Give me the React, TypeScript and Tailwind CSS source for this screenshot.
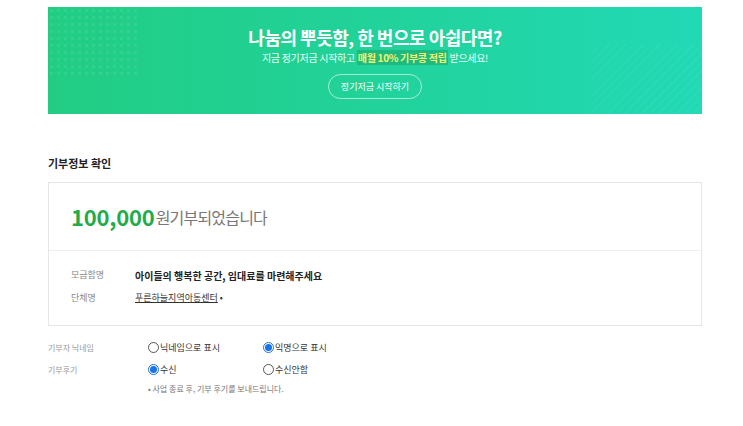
import React from "react";

const font = { fontFamily: '"Noto Sans CJK KR", "Noto Sans", sans-serif' };

function Radio({ checked, label }: { checked?: boolean; label: string }) {
    return (
        <label className="flex items-center gap-[1px] text-[9px] text-[#333] leading-none">
            <span
                className={`w-[11px] h-[11px] rounded-full border flex items-center justify-center ${checked ? "border-[#1a73e8]" : "border-[#555]"}`}
            >
                {checked && <span className="w-[7px] h-[7px] rounded-full bg-[#1a73e8]" />}
            </span>
            {label}
        </label>
    );
}

export default function App() {
    return (
        <div className="min-h-screen bg-white pt-[7px]" style={font}>
            <div className="ml-[48px] w-[654px]">
                {/* Banner */}
                <div className="relative h-[107px] overflow-hidden bg-gradient-to-r from-[#22cd83] via-[#21d29a] to-[#22d9b6] flex flex-col items-center">
                    <div className="absolute left-0 top-0 w-[90px] h-[70px] opacity-[0.07] bg-[radial-gradient(circle,#ffffff_1.5px,transparent_2px)] bg-[length:7px_7px]" />
                    <div className="absolute right-0 bottom-0 w-[110px] h-[70px] opacity-[0.05] bg-[repeating-linear-gradient(135deg,#ffffff_0px,#ffffff_1px,transparent_1px,transparent_6px)]" />
                    <h2 className="relative mt-[19px] text-[18px] font-bold text-white leading-[22px] tracking-[-0.5px]">
                        나눔의 뿌듯함, 한 번으로 아쉽다면?
                    </h2>
                    <p className="relative mt-[3px] text-[10px] text-[#eafff5] leading-[13px] tracking-[-0.3px]">
                        지금 정기저금 시작하고{" "}
                        <span className="bg-[#1aa86e]/60 text-[#f4f56a] font-bold px-[1px]">매월 10% 기부콩 적립</span>{" "}
                        받으세요!
                    </p>
                    <button className="relative mt-[10px] w-[94px] h-[25px] rounded-full border border-white/60 text-[9px] text-white leading-none">
                        정기저금 시작하기
                    </button>
                </div>

                {/* Title */}
                <h3 className="mt-[42px] text-[11px] font-bold text-[#222] leading-[14px]">기부정보 확인</h3>

                {/* Card */}
                <div className="mt-[12px] border border-[#e6e6e6]">
                    <div className="h-[68px] px-[22px] flex items-center border-b border-[#efefef]">
                        <span className="text-[22px] font-bold text-[#1fac4a] tracking-[-0.2px]">100,000</span>
                        <span className="ml-[1px] text-[16px] text-[#777] tracking-[-0.8px]">원기부되었습니다</span>
                    </div>
                    <div className="px-[22px] pt-[17px] pb-[20px] flex flex-col gap-[9px] text-[9px]">
                        <div className="flex items-center h-[14px]">
                            <span className="w-[64px] text-[#888]">모금함명</span>
                            <span className="font-bold text-[#222] text-[10px]">아이들의 행복한 공간, 임대료를 마련해주세요</span>
                        </div>
                        <div className="flex items-center h-[14px]">
                            <span className="w-[64px] text-[#888]">단체명</span>
                            <span className="text-[#333] underline">푸른하늘지역아동센터</span>
                            <span className="ml-[2px] text-[#333]">•</span>
                        </div>
                    </div>
                </div>

                {/* Options */}
                <div className="mt-[16px] flex flex-col gap-[11px] text-[8px]">
                    <div className="flex items-center h-[11px]">
                        <span className="w-[100px] text-[#999]">기부자 닉네임</span>
                        <div className="w-[115px]"><Radio label="닉네임으로 표시" /></div>
                        <Radio checked label="익명으로 표시" />
                    </div>
                    <div className="flex items-center h-[11px]">
                        <span className="w-[100px] text-[#999]">기부후기</span>
                        <div className="w-[115px]"><Radio checked label="수신" /></div>
                        <Radio label="수신안함" />
                    </div>
                </div>
                <p className="mt-[8px] ml-[100px] text-[8px] text-[#777]">• 사업 종료 후, 기부 후기를 보내드립니다.</p>
            </div>
        </div>
    );
}
